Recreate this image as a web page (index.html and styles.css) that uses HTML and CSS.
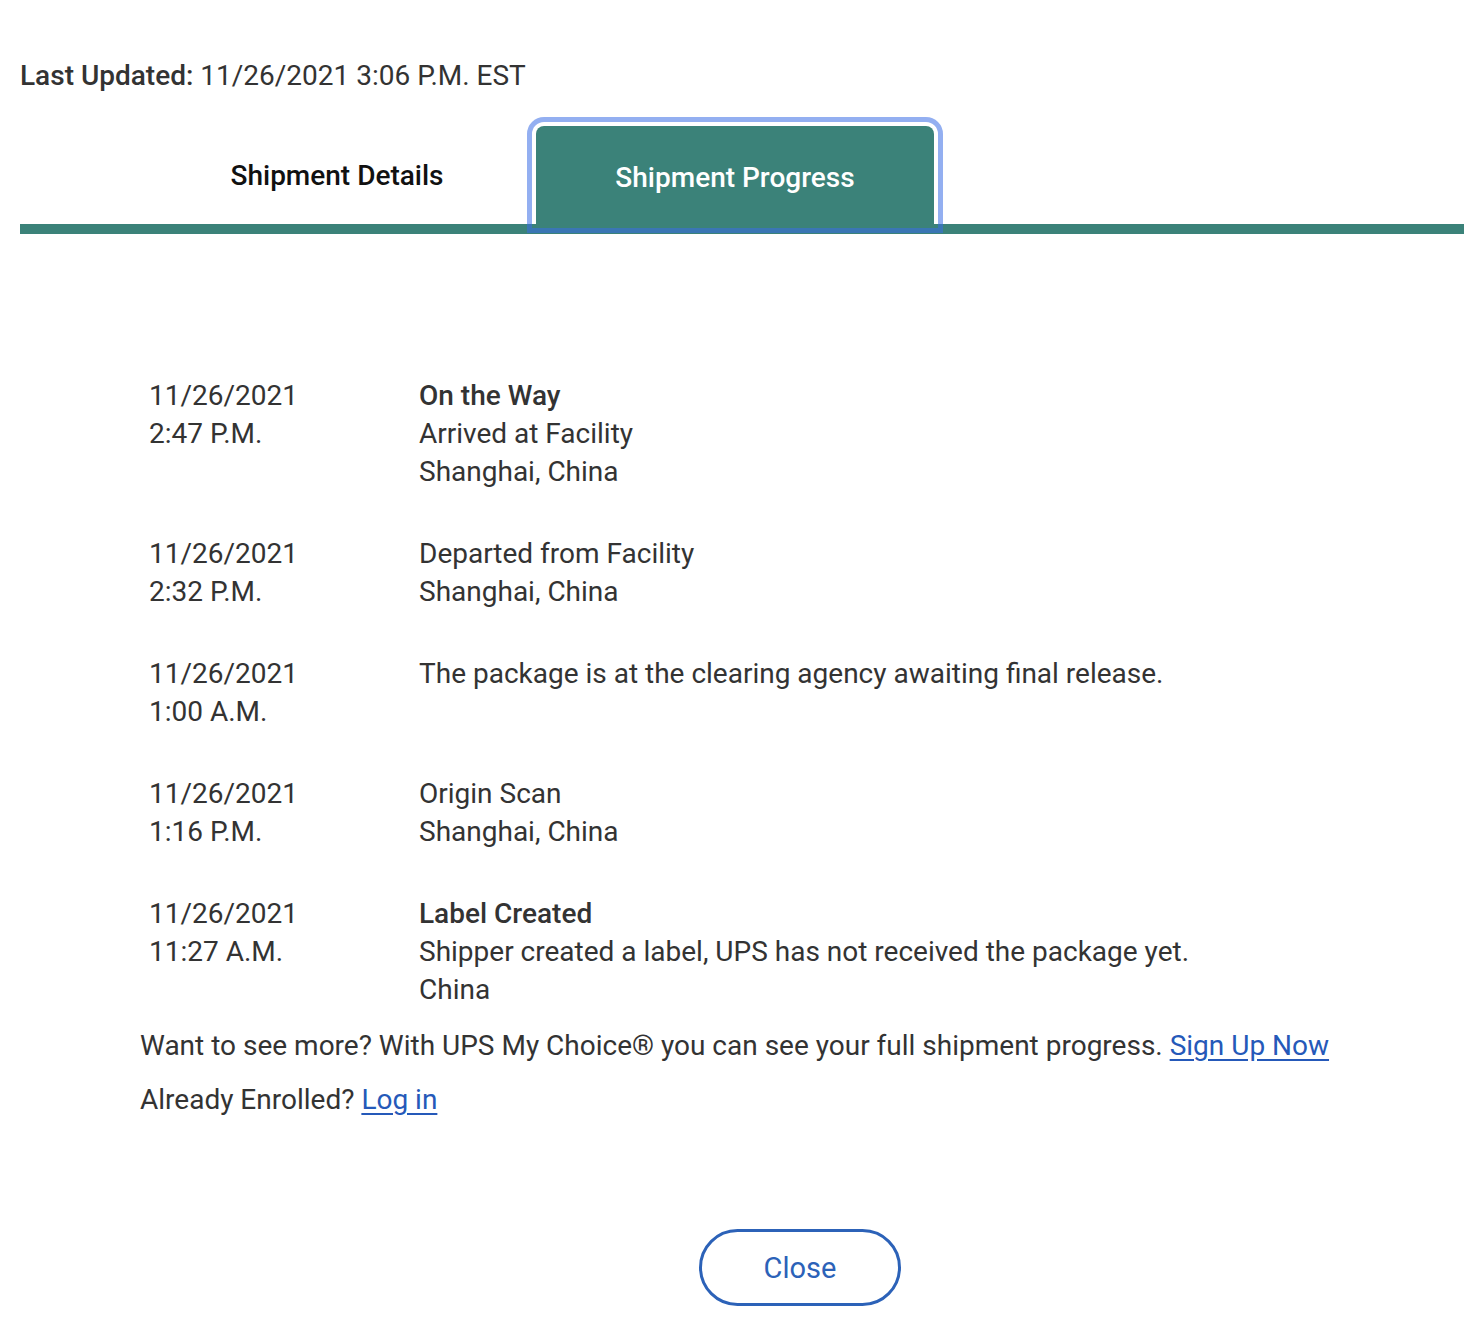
FILE: index.html
```html
<!DOCTYPE html>
<html>
<head>
    <title>Shipment Progress</title>
    <meta name="viewport" content="width=device-width, initial-scale=1.0">
    <link rel="stylesheet" href="styles.css">
</head>
<body>
    <div class="modal">
        <p class="updated"><strong>Last Updated:</strong> 11/26/2021 3:06 P.M. EST</p>

        <!-- tab strip -->
        <div class="tabs">
            <button class="tab">Shipment Details</button>
            <button class="tab active">Shipment Progress</button>
        </div>

        <div class="progress">
            <div class="event">
                <div class="when">11/26/2021<br>2:47 P.M.</div>
                <div class="what"><strong>On the Way</strong><br>Arrived at Facility<br>Shanghai, China</div>
            </div>
            <div class="event">
                <div class="when">11/26/2021<br>2:32 P.M.</div>
                <div class="what">Departed from Facility<br>Shanghai, China</div>
            </div>
            <div class="event">
                <div class="when">11/26/2021<br>1:00 A.M.</div>
                <div class="what">The package is at the clearing agency awaiting final release.</div>
            </div>
            <div class="event">
                <div class="when">11/26/2021<br>1:16 P.M.</div>
                <div class="what">Origin Scan<br>Shanghai, China</div>
            </div>
            <div class="event">
                <div class="when">11/26/2021<br>11:27 A.M.</div>
                <div class="what"><strong>Label Created</strong><br>Shipper created a label, UPS has not received the package yet.<br>China</div>
            </div>

            <p class="more">Want to see more? With UPS My Choice&reg; you can see your full shipment progress. <a href="#">Sign Up Now</a></p>
            <p class="more">Already Enrolled? <a href="#">Log in</a></p>
        </div>

        <div class="actions">
            <button class="close">Close</button>
        </div>
    </div>
</body>
</html>
```

FILE: styles.css
```css
body {
    margin: 0;
    font-family: Roboto, "Liberation Sans", sans-serif;
    color: #333333;
    background: #ffffff;
}

.modal {
    margin-left: 20px;
    padding-top: 57px;
    font-size: 28px;
    line-height: 38px;
}

.updated {
    margin: 0;
}

.updated strong {
    font-weight: 500;
}

/* tabs sit on the teal bar */
.tabs {
    display: flex;
    align-items: flex-end;
    margin-top: 31px;
    padding-left: 118px;
    border-bottom: 10px solid #3b8279;
}

.tab {
    width: 398px;
    height: 98px;
    border: none;
    border-radius: 8px 8px 0 0;
    background: transparent;
    font-family: Roboto, "Liberation Sans", sans-serif;
    font-size: 28px;
    font-weight: 500;
    color: #111111;
    padding: 0;
}

.tab.active {
    background-color: #3b8279;
    color: #ffffff;
    padding-top: 4px;
    outline: 5px solid rgba(59, 110, 230, 0.55);
    outline-offset: 4px;
}

.progress {
    padding-top: 143px;
    padding-left: 120px;
}

.event {
    display: flex;
    margin-left: 9px;
    margin-bottom: 44px;
}

.event:last-of-type {
    margin-bottom: 18px;
}

.when {
    width: 270px;
    flex-shrink: 0;
}

.what strong {
    font-weight: 500;
}

.more {
    margin: 0 0 16px;
}

.more a {
    color: #2559b9;
    text-decoration: underline;
    text-underline-offset: 4px;
}

/* button centre sits a bit right of the page centre */
.actions {
    display: flex;
    justify-content: center;
    padding-top: 94px;
    padding-left: 116px;
}

.close {
    width: 202px;
    height: 77px;
    border: 3px solid #2c62b8;
    border-radius: 40px;
    background: #ffffff;
    color: #2c62b8;
    font-family: Roboto, "Liberation Sans", sans-serif;
    font-size: 29px;
}
```
